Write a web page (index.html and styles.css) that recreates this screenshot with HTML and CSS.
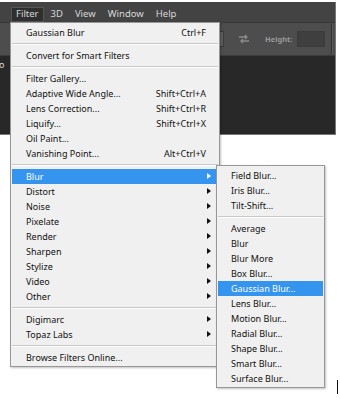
FILE: index.html
```html
<!DOCTYPE html>
<html lang="en">
<head>
    <meta charset="utf-8">
    <meta name="viewport" content="width=device-width, initial-scale=1">
    <title>Filter Menu</title>
    <link rel="stylesheet" href="styles.css">
</head>
<body>
    <div class="app">
        <div class="menubar">
            <span class="top-item active">Filter</span>
            <span class="top-item">3D</span>
            <span class="top-item">View</span>
            <span class="top-item">Window</span>
            <span class="top-item">Help</span>
        </div>
        <div class="toolbar">
            <span class="field field-width"></span>
            <svg class="swap" width="12" height="10" viewBox="0 0 12 10">
                <path d="M1 3h8M7 1l2 2-2 2M11 7H3M5 5L3 7l2 2" fill="none" stroke="#8a8a8a" stroke-width="1.4"/>
            </svg>
            <span class="tool-label">Height:</span>
            <span class="field field-height"></span>
            <span class="tool-sep"></span>
        </div>
        <div class="workspace">
            <span class="tab-text">o</span>
        </div>
    </div>

    <div class="menu main-menu">
        <div class="item"><span>Gaussian Blur</span><span class="key">Ctrl+F</span></div>
        <div class="sep"></div>
        <div class="item"><span>Convert for Smart Filters</span></div>
        <div class="sep"></div>
        <div class="item"><span>Filter Gallery...</span></div>
        <div class="item"><span>Adaptive Wide Angle...</span><span class="key">Shift+Ctrl+A</span></div>
        <div class="item"><span>Lens Correction...</span><span class="key">Shift+Ctrl+R</span></div>
        <div class="item"><span>Liquify...</span><span class="key">Shift+Ctrl+X</span></div>
        <div class="item"><span>Oil Paint...</span></div>
        <div class="item"><span>Vanishing Point...</span><span class="key">Alt+Ctrl+V</span></div>
        <div class="sep"></div>
        <div class="item sub selected"><span>Blur</span></div>
        <div class="item sub"><span>Distort</span></div>
        <div class="item sub"><span>Noise</span></div>
        <div class="item sub"><span>Pixelate</span></div>
        <div class="item sub"><span>Render</span></div>
        <div class="item sub"><span>Sharpen</span></div>
        <div class="item sub"><span>Stylize</span></div>
        <div class="item sub"><span>Video</span></div>
        <div class="item sub"><span>Other</span></div>
        <div class="sep"></div>
        <div class="item sub"><span>Digimarc</span></div>
        <div class="item sub"><span>Topaz Labs</span></div>
        <div class="sep"></div>
        <div class="item"><span>Browse Filters Online...</span></div>
    </div>

    <div class="menu sub-menu">
        <div class="item"><span>Field Blur...</span></div>
        <div class="item"><span>Iris Blur...</span></div>
        <div class="item"><span>Tilt-Shift...</span></div>
        <div class="sep"></div>
        <div class="item"><span>Average</span></div>
        <div class="item"><span>Blur</span></div>
        <div class="item"><span>Blur More</span></div>
        <div class="item"><span>Box Blur...</span></div>
        <div class="item selected"><span>Gaussian Blur...</span></div>
        <div class="item"><span>Lens Blur...</span></div>
        <div class="item"><span>Motion Blur...</span></div>
        <div class="item"><span>Radial Blur...</span></div>
        <div class="item"><span>Shape Blur...</span></div>
        <div class="item"><span>Smart Blur...</span></div>
        <div class="item"><span>Surface Blur...</span></div>
    </div>

    <span class="caret"></span>
</body>
</html>
```

FILE: styles.css
```css
body {
    margin: 0;
    height: 400px;
    position: relative;
    overflow: hidden;
    background-color: #fff;
    font-family: "Noto Sans", "Open Sans", sans-serif;
}
.app {
    width: 335px;
    height: 132px;
    margin-top: 2px;
    display: flex;
    flex-direction: column;
    background-color: #282828;
    border-right: 1px solid #777;
    border-bottom: 1px solid #777;
}
.menubar {
    height: 20px;
    display: flex;
    align-items: flex-end;
    gap: 2px;
    padding-left: 11px;
    background-color: #434343;
    font-size: 9.5px;
    color: #d8d8d8;
}
.top-item {
    height: 15px;
    line-height: 14px;
    padding: 0 5px;
}
.top-item.active {
    background-color: #2f2f2f;
    box-shadow: inset 0 0 0 1px #555;
}
.toolbar {
    height: 32px;
    display: flex;
    align-items: center;
    background-color: #4d4d4d;
    border-top: 1px solid #383838;
}
.field {
    height: 14px;
    border: 1px solid #3a3a3a;
    background-color: #444;
}
.field-width {
    width: 22px;
    margin-left: 200px;
    background-color: #5e5e5e;
}
.swap {
    margin-left: 14px;
}
.tool-label {
    margin-left: 15px;
    font-size: 7.5px;
    font-weight: bold;
    color: #9a9a9a;
}
.field-height {
    width: 26px;
    margin-left: 5px;
    background-color: #3f3f3f;
}
.tool-sep {
    width: 1px;
    height: 30px;
    margin-left: 6px;
    background-color: #333;
    border-right: 1px solid #5a5a5a;
}
.workspace {
    flex: 1;
    border-top: 1px solid #3a3a3a;
}
.tab-text {
    display: block;
    margin: 2px 0 0 0;
    font-size: 9px;
    color: #ddd;
    text-indent: -1px;
}

/* dropdown menus */
.menu {
    position: absolute;
    background-color: #f0f0f0;
    border: 1px solid #979797;
    box-shadow: 1px 1px 2px rgba(0, 0, 0, 0.25);
    font-size: 9px;
    color: #111;
}
.main-menu {
    left: 10px;
    top: 22px;
    width: 208px;
    padding: 2px 0 1px;
}
.sub-menu {
    left: 216px;
    top: 165px;
    width: 107px;
    padding: 2px 0 1px;
}
.item {
    position: relative;
    height: 15px;
    line-height: 15px;
    display: flex;
    padding: 0 13px 0 15px;
    white-space: nowrap;
}
.sub-menu .item {
    padding-left: 14px;
}
.key {
    margin-left: auto;
}
.item.selected {
    margin: 0 1px;
    padding-left: 14px;
    background-color: #3594ee;
    color: #fff;
}
.sub-menu .item.selected {
    padding-left: 13px;
}
.item.sub::after {
    content: "";
    position: absolute;
    right: 8px;
    top: 4px;
    border-left: 4px solid #111;
    border-top: 3.5px solid transparent;
    border-bottom: 3.5px solid transparent;
}
.item.sub.selected::after {
    right: 7px;
    border-left-color: #fff;
}
.sep {
    margin: 3px 1px;
    border-top: 1px solid #c8c8c8;
    border-bottom: 1px solid #fff;
}
.caret {
    position: absolute;
    left: 337px;
    top: 380px;
    width: 1px;
    height: 14px;
    background-color: #111;
}
```
